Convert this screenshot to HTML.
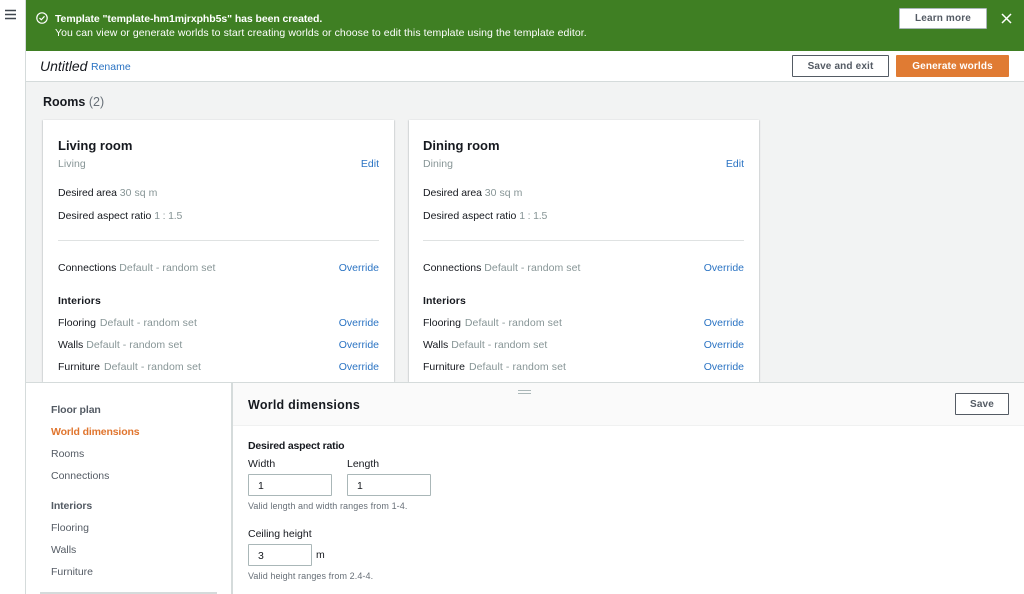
<!DOCTYPE html>
<html><head><meta charset="utf-8">
<style>
html,body{margin:0;padding:0;width:1024px;height:594px;overflow:hidden;background:#fff;font-family:"Liberation Sans",sans-serif;}
#p{position:relative;width:1024px;height:594px;overflow:hidden;background:#f2f3f3;}
#p div,#p span.t{position:absolute;}
.t{position:absolute;white-space:nowrap;font-size:10.5px;line-height:14px;color:#16191f;letter-spacing:0}
.g{color:#879596;letter-spacing:.05px}
.g2{color:#879596;letter-spacing:.1px;margin-left:1px}
.g3{color:#879596;letter-spacing:-.2px}
.l{color:#2a73c3}
.b{font-weight:bold}
.r{transform:translateX(-100%)}
.h{font-size:13px;line-height:16px;font-weight:bold}
.card{background:#fff;top:120px;height:262px;box-shadow:0 1px 1px rgba(0,28,36,.2),1px 0 1px rgba(0,28,36,.1),-1px 0 1px rgba(0,28,36,.1)}
.hr{background:#dfe2e2;height:1px}
.btn{box-sizing:border-box;text-align:center;font-weight:bold;font-size:10px;letter-spacing:.15px;color:#545b64;background:#fff;border:1px solid #545b64;border-radius:1px}
.inp{box-sizing:border-box;height:22px;background:#fff;border:1px solid #aab7b8;border-radius:1px;font-size:10.5px;line-height:22px;padding-left:9px;color:#16191f}
.nav{color:#545b64}
.nb{color:#545b64;letter-spacing:-.1px}
.hint{font-size:9px;color:#687078;letter-spacing:.09px}
</style></head><body><div id="p">
<div style="left:0;top:0;width:25px;height:594px;background:#fff;border-right:1px solid #d5dbdb"></div>
<svg style="position:absolute;left:5px;top:9px" width="11" height="11" viewBox="0 0 11 11"><path d="M0 1.500h11M0 5.500h11M0 9.500h11" stroke="#3f464e" stroke-width="1.600"/></svg>

<div style="left:26px;top:0;width:998px;height:51px;background:#3f7f23"></div>
<svg style="position:absolute;left:36px;top:12px" width="12" height="12" viewBox="0 0 12 12"><circle cx="6" cy="6" r="5.200" fill="none" stroke="#fff" stroke-width="1.200"/><path d="M3.500 6l1.800 1.800L8.500 4.300" fill="none" stroke="#fff" stroke-width="1.200"/></svg>
<span class="t b" style="left:55px;top:12px;color:#fff;letter-spacing:-.08px">Template "template-hm1mjrxphb5s" has been created.</span>
<span class="t" style="left:55px;top:26px;color:#fff;letter-spacing:.075px">You can view or generate worlds to start creating worlds or choose to edit this template using the template editor.</span>
<div class="btn" style="left:899px;top:8px;width:88px;height:21px;line-height:20px;border-color:#aab7b8">Learn more</div>
<svg style="position:absolute;left:1001px;top:13px" width="11" height="11" viewBox="0 0 11 11"><path d="M1 1l9 9M10 1l-9 9" stroke="#fff" stroke-width="1.500"/></svg>

<div style="left:26px;top:51px;width:998px;height:30px;background:#fff;border-bottom:1px solid #d5dbdb"></div>
<span class="t" style="left:40px;top:58px;font-size:14px;font-style:italic;line-height:16px">Untitled</span>
<span class="t l" style="left:91px;top:60px">Rename</span>
<div class="btn" style="left:792px;top:55px;width:97px;height:22px;line-height:21px">Save and exit</div>
<div class="btn" style="left:896px;top:55px;width:113px;height:22px;line-height:21px;background:#e07b33;border-color:#e07b33;color:#fff">Generate worlds</div>

<span class="t b" style="left:43px;top:94px;font-size:12.500px;line-height:16px">Rooms <span style="font-weight:normal;color:#687078">(2)</span></span>

<div class="card" style="left:43px;width:351px"></div>
<span class="t h" style="left:58px;top:138px">Living room</span>
<span class="t g" style="left:58px;top:157px">Living</span>
<span class="t l r" style="left:379px;top:157px">Edit</span>
<span class="t" style="left:58px;top:186px;letter-spacing:-.1px">Desired area <span class="g">30 sq m</span></span>
<span class="t" style="left:58px;top:209px">Desired aspect ratio <span class="g3">1 : 1.5</span></span>
<div class="hr" style="left:58px;top:240px;width:321px"></div>
<span class="t" style="left:58px;top:261px">Connections <span class="g">Default - random set</span></span>
<span class="t l r" style="left:379px;top:261px">Override</span>
<span class="t b" style="left:58px;top:294px;letter-spacing:.1px">Interiors</span>
<span class="t" style="left:58px;top:316px">Flooring <span class="g2">Default - random set</span></span>
<span class="t l r" style="left:379px;top:316px">Override</span>
<span class="t" style="left:58px;top:338px">Walls <span class="g">Default - random set</span></span>
<span class="t l r" style="left:379px;top:338px">Override</span>
<span class="t" style="left:58px;top:360px">Furniture <span class="g2">Default - random set</span></span>
<span class="t l r" style="left:379px;top:360px">Override</span>

<div class="card" style="left:409px;width:350px"></div>
<span class="t h" style="left:423px;top:138px">Dining room</span>
<span class="t g" style="left:423px;top:157px">Dining</span>
<span class="t l r" style="left:744px;top:157px">Edit</span>
<span class="t" style="left:423px;top:186px;letter-spacing:-.1px">Desired area <span class="g">30 sq m</span></span>
<span class="t" style="left:423px;top:209px">Desired aspect ratio <span class="g3">1 : 1.5</span></span>
<div class="hr" style="left:423px;top:240px;width:321px"></div>
<span class="t" style="left:423px;top:261px">Connections <span class="g">Default - random set</span></span>
<span class="t l r" style="left:744px;top:261px">Override</span>
<span class="t b" style="left:423px;top:294px;letter-spacing:.1px">Interiors</span>
<span class="t" style="left:423px;top:316px">Flooring <span class="g2">Default - random set</span></span>
<span class="t l r" style="left:744px;top:316px">Override</span>
<span class="t" style="left:423px;top:338px">Walls <span class="g">Default - random set</span></span>
<span class="t l r" style="left:744px;top:338px">Override</span>
<span class="t" style="left:423px;top:360px">Furniture <span class="g2">Default - random set</span></span>
<span class="t l r" style="left:744px;top:360px">Override</span>

<div style="left:26px;top:382px;width:998px;height:212px;background:#fff;border-top:1px solid #d5dbdb"></div>
<div style="left:232px;top:383px;width:792px;height:43px;background:#fafafa;border-bottom:1px solid #f0f1f1;box-sizing:border-box"></div>
<div style="left:231px;top:383px;width:2px;height:211px;background:#d5dbdb"></div>
<div style="left:518px;top:390px;width:13px;height:1px;background:#aab7b8"></div>
<div style="left:518px;top:393px;width:13px;height:1px;background:#aab7b8"></div>

<span class="t b nb" style="left:51px;top:403px">Floor plan</span>
<span class="t b" style="left:51px;top:425px;color:#e0752e;letter-spacing:-.15px">World dimensions</span>
<span class="t nav" style="left:51px;top:447px">Rooms</span>
<span class="t nav" style="left:51px;top:469px">Connections</span>
<span class="t b nb" style="left:51px;top:499px">Interiors</span>
<span class="t nav" style="left:51px;top:521px">Flooring</span>
<span class="t nav" style="left:51px;top:543px">Walls</span>
<span class="t nav" style="left:51px;top:565px">Furniture</span>
<div style="left:40px;top:592px;width:177px;height:2px;background:#d5dbdb"></div>

<span class="t b" style="left:248px;top:397px;font-size:12.500px;line-height:16px;letter-spacing:.25px">World dimensions</span>
<div class="btn" style="left:955px;top:393px;width:54px;height:22px;line-height:21px">Save</div>

<span class="t b" style="left:248px;top:439px;letter-spacing:-.2px">Desired aspect ratio</span>
<span class="t" style="left:248px;top:457px;letter-spacing:.1px">Width</span>
<span class="t" style="left:347px;top:457px">Length</span>
<div class="inp" style="left:248px;top:474px;width:84px">1</div>
<div class="inp" style="left:347px;top:474px;width:84px">1</div>
<span class="t hint" style="left:248px;top:499px">Valid length and width ranges from 1-4.</span>
<span class="t" style="left:248px;top:527px">Ceiling height</span>
<div class="inp" style="left:248px;top:544px;width:64px">3</div>
<span class="t" style="left:316px;top:548px">m</span>
<span class="t hint" style="left:248px;top:569px">Valid height ranges from 2.4-4.</span>
</div></body></html>
